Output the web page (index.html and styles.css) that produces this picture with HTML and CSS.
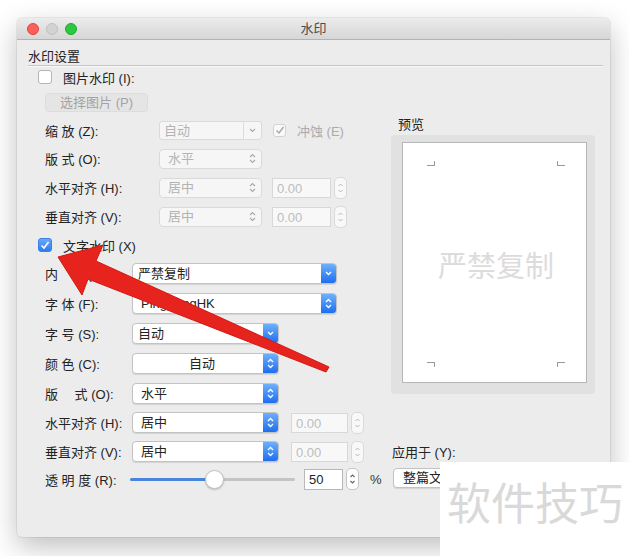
FILE: index.html
```html
<!DOCTYPE html>
<html lang="zh-CN">
<head>
    <meta charset="UTF-8">
    <title>水印</title>
    <link rel="stylesheet" href="styles.css">
</head>
<body>
    <div class="window">
        <div class="titlebar">
            <div class="lights">
                <span class="light red"></span>
                <span class="light gray"></span>
                <span class="light green"></span>
            </div>
            <div class="title">水印</div>
            <div></div>
        </div>
        <div class="content">
            <div class="group-title">水印设置</div>
            <div class="sep"></div>
            <div class="main">
                <div class="form">
                    <div class="row h22 boxrow">
                        <span class="check"></span>
                        <span class="check-text">图片水印 (I):</span>
                    </div>
                    <div class="row h28">
                        <span class="btn-dis">选择图片 (P)</span>
                    </div>
                    <div class="row h28">
                        <span class="lbl wide">缩 放 (Z):</span>
                        <div class="combo dis w103">
                            <span class="val">自动</span>
                            <span class="cbtn"><svg width="7" height="5" viewBox="0 0 7 5"><path d="M1 1l2.5 2.5L6 1" fill="none" stroke="currentColor" stroke-width="1.1"/></svg></span>
                        </div>
                        <span class="check dis on"><svg width="10" height="9" viewBox="0 0 10 9"><path d="M1.5 4.5l2.5 2.5 4.5-6" fill="none" stroke="currentColor" stroke-width="1.4"/></svg></span>
                        <span class="dis-text">冲蚀 (E)</span>
                    </div>
                    <div class="row h29">
                        <span class="lbl wide">版 式 (O):</span>
                        <div class="popup dis w103">
                            <span class="val">水平</span>
                            <span class="pcap"><svg width="7" height="11" viewBox="0 0 7 11"><path d="M1 4l2.5-2.5L6 4M1 7l2.5 2.5L6 7" fill="none" stroke="currentColor" stroke-width="1.1"/></svg></span>
                        </div>
                    </div>
                    <div class="row h29">
                        <span class="lbl wide">水平对齐 (H):</span>
                        <div class="popup dis w103">
                            <span class="val">居中</span>
                            <span class="pcap"><svg width="7" height="11" viewBox="0 0 7 11"><path d="M1 4l2.5-2.5L6 4M1 7l2.5 2.5L6 7" fill="none" stroke="currentColor" stroke-width="1.1"/></svg></span>
                        </div>
                        <span class="field dis f59">0.00</span>
                        <span class="stepper dis"><svg width="7" height="14" viewBox="0 0 7 14"><path d="M1.5 5l2-2 2 2M1.5 9l2 2 2-2" fill="none" stroke="currentColor" stroke-width="1"/></svg></span>
                    </div>
                    <div class="row h29">
                        <span class="lbl wide">垂直对齐 (V):</span>
                        <div class="popup dis w103">
                            <span class="val">居中</span>
                            <span class="pcap"><svg width="7" height="11" viewBox="0 0 7 11"><path d="M1 4l2.5-2.5L6 4M1 7l2.5 2.5L6 7" fill="none" stroke="currentColor" stroke-width="1.1"/></svg></span>
                        </div>
                        <span class="field dis f59">0.00</span>
                        <span class="stepper dis"><svg width="7" height="14" viewBox="0 0 7 14"><path d="M1.5 5l2-2 2 2M1.5 9l2 2 2-2" fill="none" stroke="currentColor" stroke-width="1"/></svg></span>
                    </div>
                    <div class="row h28 boxrow">
                        <span class="check on blue"><svg width="10" height="9" viewBox="0 0 10 9"><path d="M1.5 4.5l2.5 2.5 4.5-6" fill="none" stroke="currentColor" stroke-width="1.6"/></svg></span>
                        <span class="check-text">文字水印 (X)</span>
                    </div>
                    <div class="row h29">
                        <span class="lbl">内　容 (T):</span>
                        <div class="popup w205">
                            <span class="val tight">严禁复制</span>
                            <span class="cap"><svg width="7" height="5" viewBox="0 0 7 5"><path d="M1 1l2.5 2.5L6 1" fill="none" stroke="currentColor" stroke-width="1.3"/></svg></span>
                        </div>
                    </div>
                    <div class="row h30">
                        <span class="lbl">字 体 (F):</span>
                        <div class="popup w205">
                            <span class="val">PingFangHK</span>
                            <span class="cap"><svg width="7" height="11" viewBox="0 0 7 11"><path d="M1 4l2.5-2.5L6 4M1 7l2.5 2.5L6 7" fill="none" stroke="currentColor" stroke-width="1.3"/></svg></span>
                        </div>
                    </div>
                    <div class="row h30">
                        <span class="lbl">字 号 (S):</span>
                        <div class="popup w147">
                            <span class="val tight">自动</span>
                            <span class="cap"><svg width="7" height="5" viewBox="0 0 7 5"><path d="M1 1l2.5 2.5L6 1" fill="none" stroke="currentColor" stroke-width="1.3"/></svg></span>
                        </div>
                    </div>
                    <div class="row h30">
                        <span class="lbl">颜 色 (C):</span>
                        <div class="popup w147">
                            <span class="val center">自动</span>
                            <span class="cap"><svg width="7" height="11" viewBox="0 0 7 11"><path d="M1 4l2.5-2.5L6 4M1 7l2.5 2.5L6 7" fill="none" stroke="currentColor" stroke-width="1.3"/></svg></span>
                        </div>
                    </div>
                    <div class="row h30">
                        <span class="lbl">版　 式 (O):</span>
                        <div class="popup w147">
                            <span class="val">水平</span>
                            <span class="cap"><svg width="7" height="11" viewBox="0 0 7 11"><path d="M1 4l2.5-2.5L6 4M1 7l2.5 2.5L6 7" fill="none" stroke="currentColor" stroke-width="1.3"/></svg></span>
                        </div>
                    </div>
                    <div class="row h29">
                        <span class="lbl">水平对齐 (H):</span>
                        <div class="popup w147">
                            <span class="val">居中</span>
                            <span class="cap"><svg width="7" height="11" viewBox="0 0 7 11"><path d="M1 4l2.5-2.5L6 4M1 7l2.5 2.5L6 7" fill="none" stroke="currentColor" stroke-width="1.3"/></svg></span>
                        </div>
                        <span class="field dis f57">0.00</span>
                        <span class="stepper dis"><svg width="7" height="14" viewBox="0 0 7 14"><path d="M1.5 5l2-2 2 2M1.5 9l2 2 2-2" fill="none" stroke="currentColor" stroke-width="1"/></svg></span>
                    </div>
                    <div class="row h29">
                        <span class="lbl">垂直对齐 (V):</span>
                        <div class="popup w147">
                            <span class="val">居中</span>
                            <span class="cap"><svg width="7" height="11" viewBox="0 0 7 11"><path d="M1 4l2.5-2.5L6 4M1 7l2.5 2.5L6 7" fill="none" stroke="currentColor" stroke-width="1.3"/></svg></span>
                        </div>
                        <span class="field dis f57">0.00</span>
                        <span class="stepper dis"><svg width="7" height="14" viewBox="0 0 7 14"><path d="M1.5 5l2-2 2 2M1.5 9l2 2 2-2" fill="none" stroke="currentColor" stroke-width="1"/></svg></span>
                    </div>
                    <div class="row h26">
                        <span class="lbl slim">透 明 度 (R):</span>
                        <div class="slider">
                            <div class="track"></div>
                            <div class="knob"></div>
                        </div>
                        <span class="field f39">50</span>
                        <span class="stepper"><svg width="7" height="14" viewBox="0 0 7 14"><path d="M1.5 5l2-2 2 2M1.5 9l2 2 2-2" fill="none" stroke="currentColor" stroke-width="1.1"/></svg></span>
                        <span class="pct">%</span>
                    </div>
                </div>
                <div class="side">
                    <div class="side-label">预览</div>
                    <div class="preview-box">
                        <div class="page">
                            <div class="marks">
                                <span class="mark tl"></span>
                                <span class="mark tr"></span>
                            </div>
                            <div class="wm">严禁复制</div>
                            <div class="marks">
                                <span class="mark bl"></span>
                                <span class="mark br"></span>
                            </div>
                        </div>
                    </div>
                    <div class="apply-label">应用于 (Y):</div>
                    <div class="popup apply">
                        <span class="val">整篇文档</span>
                        <span class="cap"><svg width="7" height="11" viewBox="0 0 7 11"><path d="M1 4l2.5-2.5L6 4M1 7l2.5 2.5L6 7" fill="none" stroke="currentColor" stroke-width="1.3"/></svg></span>
                    </div>
                </div>
            </div>
        </div>
    </div>

    <!-- annotation arrow drawn over the dialog -->
    <svg class="arrow" width="629" height="556" viewBox="0 0 629 556">
        <polygon points="58,257 103,245 96,261 329,367 326,372 88,279 82,295" fill="#e6231c" stroke="#d01a14" stroke-width="1" stroke-linejoin="round"/>
    </svg>

    <div class="brand">软件技巧</div>
</body>
</html>
```

FILE: styles.css
```css
* {
    box-sizing: border-box;
}

body {
    margin: 0;
    width: 629px;
    height: 556px;
    overflow: hidden;
    position: relative;
    padding: 18px 0 0 17px;
    background: #fff;
    font-family: "Liberation Sans", "Noto Sans CJK SC", sans-serif;
    font-size: 13px;
    color: #232323;
}

.window {
    width: 593px;
    height: 519px;
    background: #ececec;
    border-radius: 5px;
    box-shadow: 0 0 0 1px rgba(0, 0, 0, 0.06), 0 10px 28px rgba(0, 0, 0, 0.25);
}

.titlebar {
    height: 22px;
    display: grid;
    grid-template-columns: 1fr auto 1fr;
    align-items: center;
    padding: 0 10px;
    background: linear-gradient(#ececec, #d6d6d6);
    border-bottom: 1px solid #b3b3b3;
    border-radius: 5px 5px 0 0;
}

.lights {
    display: flex;
    gap: 7px;
}

.light {
    width: 12px;
    height: 12px;
    border-radius: 50%;
}

.red {
    background: #fc5f57;
    border: 1px solid #e0463f;
}

.gray {
    background: #d2d2d2;
    border: 1px solid #c0c0c0;
}

.green {
    background: #2cc840;
    border: 1px solid #1eaa2e;
}

.title {
    color: #4a4a4a;
    line-height: 16px;
}

.content {
    padding: 9px 7px 0 11px;
}

.group-title {
    height: 16px;
    line-height: 16px;
    color: #222;
}

.sep {
    border-top: 1px solid #c6c6c6;
    box-shadow: 0 1px 0 #f8f8f8;
}

.main {
    display: flex;
}

.form {
    width: 363px;
}

/* form rows */
.row {
    display: flex;
    align-items: center;
    padding-left: 17px;
    white-space: nowrap;
}

.row.boxrow {
    padding-left: 10px;
}

.h22 { height: 22px; }
.h26 { height: 26px; }
.h28 { height: 28px; }
.h29 { height: 29px; }
.h30 { height: 30px; }

.lbl {
    width: 87px;
    flex-shrink: 0;
    color: #222;
}

.lbl.wide {
    width: 114px;
}

.lbl.slim {
    width: 85px;
}

.check {
    width: 14px;
    height: 14px;
    border: 1px solid #b4b4b4;
    border-radius: 3px;
    background: #fff;
    display: flex;
    align-items: center;
    justify-content: center;
    flex-shrink: 0;
}

.check.blue {
    border-color: #3a7ee8;
    background: linear-gradient(#6aa9fa, #2f7cf0);
    color: #fff;
}

.check.dis {
    width: 13px;
    height: 13px;
    margin-left: 11px;
    border-color: #d3d3d3;
    background: #f9f9f9;
    color: #a8a8a8;
}

.check-text {
    margin-left: 11px;
}

.dis-text {
    margin-left: 11px;
    color: #ababab;
}

.btn-dis {
    width: 103px;
    height: 19px;
    line-height: 18px;
    text-align: center;
    color: #a3a3a3;
    background: #e5e5e5;
    border: 1px solid #dddddd;
    border-radius: 4px;
}

/* popups and combos */
.combo,
.popup {
    display: flex;
    height: 21px;
    flex-shrink: 0;
    background: #fff;
    border: 1px solid #c3c3c3;
    border-radius: 4px;
    box-shadow: 0 1px 1px rgba(0, 0, 0, 0.1);
    overflow: hidden;
}

.val {
    flex: 1;
    padding-left: 8px;
    line-height: 19px;
    overflow: hidden;
}

.val.tight {
    padding-left: 5px;
}

.val.center {
    text-align: center;
}

.cap {
    width: 15px;
    display: flex;
    align-items: center;
    justify-content: center;
    color: #fff;
    background: linear-gradient(#6eb0fb, #1e6ef0);
}

.w103 { width: 103px; }
.w147 { width: 147px; }
.w205 { width: 205px; }

.combo.dis,
.popup.dis {
    height: 20px;
    background: #f6f6f6;
    border-color: #dadada;
    box-shadow: none;
}

.combo.dis {
    height: 19px;
    border-radius: 3px;
}

.dis .val {
    color: #b3b3b3;
    line-height: 18px;
}

.combo.dis .val {
    padding-left: 4px;
    line-height: 17px;
}

.cbtn {
    width: 18px;
    border-left: 1px solid #dcdcdc;
    display: flex;
    align-items: center;
    justify-content: center;
    color: #a9a9a9;
}

.pcap {
    width: 18px;
    display: flex;
    align-items: center;
    justify-content: center;
    color: #a9a9a9;
}

/* numeric fields */
.field {
    height: 21px;
    line-height: 19px;
    padding-left: 4px;
    background: #fff;
    border: 1px solid #b8b8b8;
    flex-shrink: 0;
}

.field.dis {
    height: 20px;
    background: #f8f8f8;
    border-color: #d8d8d8;
    color: #bdbdbd;
}

.f59 {
    width: 59px;
    margin-left: 10px;
}

.f57 {
    width: 57px;
    margin-left: 12px;
}

.f39 {
    width: 39px;
    margin-left: 9px;
}

.stepper {
    width: 13px;
    height: 22px;
    margin-left: 3px;
    border: 1px solid #c4c4c4;
    border-radius: 5px;
    background: #fff;
    display: flex;
    align-items: center;
    justify-content: center;
    color: #666;
    flex-shrink: 0;
}

.stepper.dis {
    border-color: #d9d9d9;
    background: #f8f8f8;
    color: #b9b9b9;
}

.pct {
    margin-left: 11px;
    color: #333;
}

/* slider */
.slider {
    position: relative;
    width: 165px;
    height: 20px;
    display: flex;
    align-items: center;
    flex-shrink: 0;
}

.track {
    width: 100%;
    height: 3px;
    border-radius: 2px;
    background: linear-gradient(to right, #4a85dc 0, #4a85dc 84px, #c4c4c4 84px);
}

.knob {
    position: absolute;
    left: 75px;
    top: 1px;
    width: 19px;
    height: 19px;
    border-radius: 50%;
    background: #fff;
    border: 1px solid #c2c2c2;
    box-shadow: 0 1px 2px rgba(0, 0, 0, 0.2);
}

/* preview column */
.side {
    width: 204px;
    padding-top: 51px;
}

.side-label {
    padding-left: 7px;
    line-height: 16px;
    color: #222;
}

.preview-box {
    margin-top: 2px;
    height: 259px;
    padding: 7px 8px 11px 11px;
    background: #e1e1e1;
    border-radius: 4px;
}

.page {
    height: 100%;
    display: flex;
    flex-direction: column;
    padding: 18px 21px 15px 24px;
    background: #fff;
    border: 1px solid #b6b6b6;
}

.marks {
    display: flex;
    justify-content: space-between;
}

.mark {
    width: 8px;
    height: 5px;
    border: 0 solid #9a9a9a;
}

.mark.tl { border-right-width: 1px; border-bottom-width: 1px; }
.mark.tr { border-left-width: 1px; border-bottom-width: 1px; }
.mark.bl { border-right-width: 1px; border-top-width: 1px; }
.mark.br { border-left-width: 1px; border-top-width: 1px; }

.wm {
    flex: 1;
    display: flex;
    align-items: center;
    justify-content: center;
    font-size: 29px;
    color: #dcdcdc;
}

.apply-label {
    margin-top: 51px;
    padding-left: 1px;
    line-height: 16px;
}

.popup.apply {
    margin-top: 7px;
    margin-left: 2px;
    width: 110px;
    height: 20px;
}

.apply .val {
    padding-left: 9px;
    line-height: 18px;
}

/* overlays */
.arrow {
    position: absolute;
    left: 0;
    top: 0;
    pointer-events: none;
}

.brand {
    position: absolute;
    left: 440px;
    top: 462px;
    width: 189px;
    height: 94px;
    padding: 21px 0 0 7px;
    background: #fff;
    font-size: 44px;
    line-height: 44px;
    color: #d9d9d9;
    white-space: nowrap;
}
```
